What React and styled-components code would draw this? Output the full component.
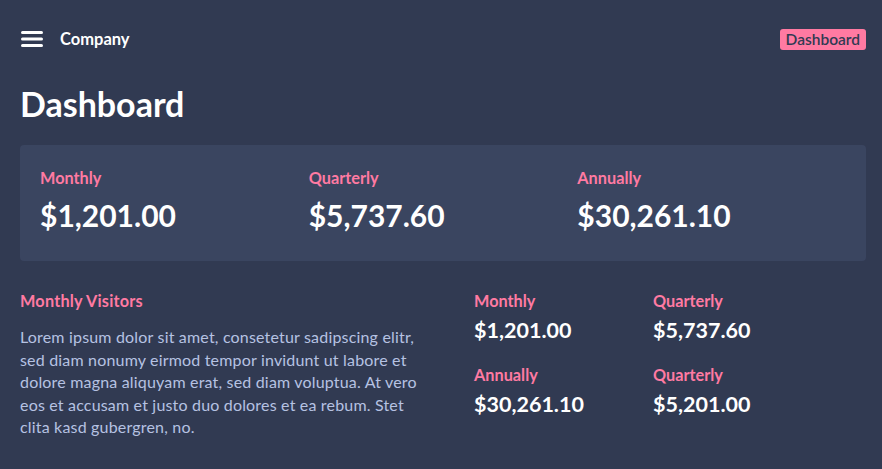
import React from 'react';
import styled, { createGlobalStyle } from 'styled-components';

const Global = createGlobalStyle`
    html, body {
        margin: 0;
        background: #313a52;
    }
    body {
        font-family: Lato, "Noto Sans", sans-serif;
        color: #ffffff;
    }
`
const Page = styled.div`
    width: 882px;
    height: 469px;
    box-sizing: border-box;
    padding: 0 16px 0 20px;
    background: #313a52;
    overflow: hidden;
`
const TopBar = styled.header`
    display: flex;
    align-items: center;
    justify-content: space-between;
    height: 78px;
`
const Brand = styled.div`
    display: flex;
    align-items: center;
    gap: 17px;
    padding-left: 1px;
    font-size: 16.5px;
    font-weight: 700;
`
const Badge = styled.span`
    background: #ff7aa2;
    color: #313a52;
    font-size: 15.5px;
    font-weight: 600;
    padding: 2px 6px;
    border-radius: 3px;
    line-height: 17px;
`
const Title = styled.h1`
    margin: 6px 0 21px;
    font-size: 34px;
    font-weight: 700;
    line-height: 40px;
`
const Card = styled.section`
    display: grid;
    grid-template-columns: repeat(3, 1fr);
    background: #3a4560;
    border-radius: 4px;
    padding: 23px 20px 28px;
`
const Stat = styled.div`
    display: flex;
    flex-direction: column;
    gap: ${p => p.$big ? '9px' : '6px'};
`
const Label = styled.span`
    color: #ff7aa2;
    font-size: 16.3px;
    font-weight: 700;
    line-height: 20px;
    letter-spacing: ${p => p.$wide ? '0.2px' : '0'};
`
const Value = styled.span`
    font-size: ${p => p.$big ? '30px' : '21.5px'};
    font-weight: 700;
    line-height: ${p => p.$big ? '36px' : '26px'};
`
const Lower = styled.section`
    display: grid;
    grid-template-columns: 434px 1fr;
    gap: 20px;
    margin-top: 30px;
`
const Text = styled.p`
    max-width: 405px;
    margin: 15px 0 0;
    color: #b6c2e2;
    font-size: 16px;
    line-height: 22.5px;
    letter-spacing: 0.18px;
`
const MiniGrid = styled.div`
    display: grid;
    grid-template-columns: 179px 179px;
    align-content: start;
    row-gap: 22px;
`

function Burger() {
    return (
        <svg width="22" height="16" viewBox="0 0 22 16">
            <rect x="0" y="0" width="22" height="3" rx="1.5" fill="#fff" />
            <rect x="0" y="6.5" width="22" height="3" rx="1.5" fill="#fff" />
            <rect x="0" y="13" width="22" height="3" rx="1.5" fill="#fff" />
        </svg>
    );
}

const big = [
    ['Monthly', '$1,201.00'],
    ['Quarterly', '$5,737.60'],
    ['Annually', '$30,261.10'],
];
const small = [
    ['Monthly', '$1,201.00'],
    ['Quarterly', '$5,737.60'],
    ['Annually', '$30,261.10'],
    ['Quarterly', '$5,201.00'],
];

export default function App() {
    return (
        <>
            <Global />
            <Page>
                <TopBar>
                    <Brand>
                        <Burger />
                        Company
                    </Brand>
                    <Badge>Dashboard</Badge>
                </TopBar>
                <Title>Dashboard</Title>
                <Card>
                    {big.map(([l, v]) => (
                        <Stat $big key={l}>
                            <Label>{l}</Label>
                            <Value $big>{v}</Value>
                        </Stat>
                    ))}
                </Card>
                <Lower>
                    <div>
                        <Label $wide>Monthly Visitors</Label>
                        <Text>
                            Lorem ipsum dolor sit amet, consetetur sadipscing elitr, sed diam nonumy eirmod tempor invidunt ut labore et dolore magna aliquyam erat, sed diam voluptua. At vero eos et accusam et justo duo dolores et ea rebum. Stet clita kasd gubergren, no.
                        </Text>
                    </div>
                    <MiniGrid>
                        {small.map(([l, v], i) => (
                            <Stat key={i}>
                                <Label>{l}</Label>
                                <Value>{v}</Value>
                            </Stat>
                        ))}
                    </MiniGrid>
                </Lower>
            </Page>
        </>
    );
}
